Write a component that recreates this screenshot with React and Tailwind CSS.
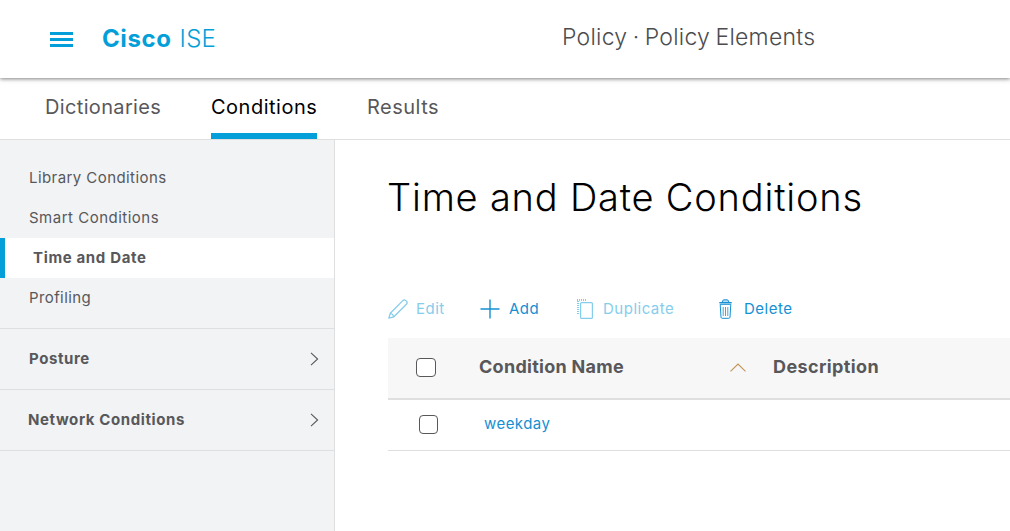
function Chevron() {
  return (
    <svg width="9" height="14" viewBox="0 0 9 14" fill="none" stroke="#58585b" strokeWidth="1.1">
      <path d="M1 .8 7.6 7 1 13.2" />
    </svg>
  );
}

function Tab({ children, className }) {
  return <a className={`flex h-[61px] items-start border-b-6 pt-[14px] text-[20px] leading-[30px] whitespace-nowrap ${className}`}>{children}</a>;
}

function SideLink({ children, className }) {
  return <a className={`block h-10 text-[15px] leading-10 whitespace-nowrap ${className}`}>{children}</a>;
}

function SideGroup({ children, className }) {
  return (
    <div className="flex h-[61px] items-center justify-between border-t border-[#dfdfdf] pr-[15px] text-[15px] font-bold">
      <span className={className}>{children}</span>
      <Chevron />
    </div>
  );
}

function Checkbox({ className }) {
  return <span role="checkbox" aria-checked="false" className={`block rounded-[4px] border border-[#58585b] bg-white ${className}`} />;
}

function Header() {
  return (
    <header className="relative flex h-[78px] shrink-0 items-start bg-white shadow-[0_1px_4px_rgba(0,0,0,0.5)]">
      <svg className="mt-8 ml-[50px]" width="23" height="15" fill="#049fd9">
        <path d="M0 0h23v3H0zM0 6h23v3H0zM0 12h23v3H0z" />
      </svg>
      <div className="mt-[23px] ml-[29px] flex w-[120px] gap-2 text-[24px] leading-8 text-[#049fd9]">
        <span className="font-bold tracking-[0.6px]">Cisco</span>
        <span className="font-light tracking-[0.3px]">ISE</span>
      </div>
      <h2 className="mt-[21px] ml-[340px] text-[23px] leading-8 font-light tracking-[0.25px] [word-spacing:-1.4px] whitespace-nowrap text-[#4c4c4f]">Policy · Policy Elements</h2>
    </header>
  );
}

function Toolbar() {
  return (
    <div className="flex h-6 items-center text-[15px] tracking-[0.5px] text-[#1590d2]">
      <div className="flex w-[92px] items-center text-[#86cdec]">
        <svg className="mr-2 shrink-0" width="20" height="20" viewBox="0 0 20 20" fill="none" stroke="currentColor" strokeWidth="1.3" strokeLinejoin="round">
          <path d="M.8 19.2 2.3 14.2 14.8 1.6Q16.2.3 17.6 1.4L18.6 2.4Q19.8 3.8 18.4 5.3L5.9 17.8ZM2.3 14.2Q4.900 14.900 5.900 17.800" />
        </svg>
        <span>Edit</span>
      </div>
      <div className="flex w-[97px] items-center">
        <svg className="mr-[9px] shrink-0" width="20" height="20" viewBox="0 0 20 20" fill="none" stroke="currentColor" strokeWidth="1.4">
          <path d="M.5 10h19M10 .5v19" />
        </svg>
        <span>Add</span>
      </div>
      <div className="flex w-[142px] items-center text-[#86cdec]">
        <svg className="mr-[10px] shrink-0" width="16" height="20" viewBox="0 0 16 20" fill="none" stroke="currentColor" strokeWidth="1.2">
          <rect x="3.6" y="3.6" width="11.8" height="15.8" rx="1" />
          <path d="M0 1h10M1 2v13" strokeWidth="2" strokeDasharray="1 1" />
        </svg>
        <span>Duplicate</span>
      </div>
      <div className="flex items-center">
        <svg className="mr-[12px] shrink-0" width="13" height="20" viewBox="0 0 13 20" fill="none" stroke="currentColor">
          <path d="M3.2 3Q3.5.8 5 .8H8Q9.5.8 9.8 3" fill="#b7dcf0" />
          <path d="M.3 3.7h12.4" strokeWidth="1.4" />
          <path d="M1.2 5.3h10.6L11 18.2Q10.8 19.3 9.8 19.3H3.2Q2.2 19.3 2 18.2Z" />
          <path d="M4.2 8v9M6.5 8v9M8.8 8v9" strokeWidth=".8" />
        </svg>
        <span>Delete</span>
      </div>
    </div>
  );
}

export default function App() {
  return (
    <div className="flex h-[531px] w-[1010px] flex-col overflow-hidden bg-white font-['Inter','Liberation_Sans',sans-serif] text-[#58585b]">
      <Header />
      <nav className="flex h-[62px] shrink-0 border-b border-[#dfdfdf] pl-[45px]">
        <Tab className="w-[166px] border-transparent tracking-[0.35px]">Dictionaries</Tab>
        <Tab className="mr-[50px] w-[106px] border-[#049fd9] tracking-[0.5px] text-black">Conditions</Tab>
        <Tab className="border-transparent tracking-[0.5px]">Results</Tab>
      </nav>
      <div className="flex min-h-0 grow">
        <aside className="w-[335px] shrink-0 border-r border-[#dfdfdf] bg-[#f1f3f5] pt-[18px]">
          <SideLink className="pl-[29px] tracking-[0.43px]">Library Conditions</SideLink>
          <SideLink className="pl-[29px] tracking-[0.5px]">Smart Conditions</SideLink>
          <SideLink className="border-l-5 border-[#049fd9] bg-white pl-[28px] font-bold tracking-[0.65px]">Time and Date</SideLink>
          <SideLink className="pl-[29px] tracking-[0.4px]">Profiling</SideLink>
          <div className="mt-[10px] border-b border-[#dfdfdf]">
            <SideGroup className="pl-[29px] tracking-[0.6px]">Posture</SideGroup>
            <SideGroup className="pl-[28px] tracking-[0.6px]">Network Conditions</SideGroup>
          </div>
        </aside>
        <main className="min-w-0 grow pt-[33px] pl-[53px]">
          <h1 className="-ml-px h-[49px] text-[38px] leading-[48px] font-light tracking-[0.8px] whitespace-nowrap text-black">Time and Date Conditions</h1>
          <div className="pt-[75px]">
            <Toolbar />
          </div>
          <div className="mt-[17px]">
            <div className="flex h-[62px] items-center border-b-2 border-[#dfdfdf] bg-[#f7f7f7] pl-7 text-[18px] font-bold">
              <Checkbox className="mr-[43px] mb-px h-[19px] w-5" />
              <span className="w-[251px] pb-1 tracking-[0.28px]">Condition Name</span>
              <svg className="mr-[27px] mb-[2px]" width="16" height="9" viewBox="0 0 16 9" fill="none" stroke="#c39156" strokeWidth="1.1">
                <path d="M.5 8.3 8 1l7.500 7.300" />
              </svg>
              <span className="pb-1 tracking-[0.38px]">Description</span>
            </div>
            <div className="flex h-[51px] items-center border-b border-[#dfdfdf] pl-[31px] text-[15px]">
              <Checkbox className="mr-[46px] mb-[2px] size-[19px]" />
              <a className="pb-px tracking-[0.45px] text-[#1590d2]">weekday</a>
            </div>
          </div>
        </main>
      </div>
    </div>
  );
}
